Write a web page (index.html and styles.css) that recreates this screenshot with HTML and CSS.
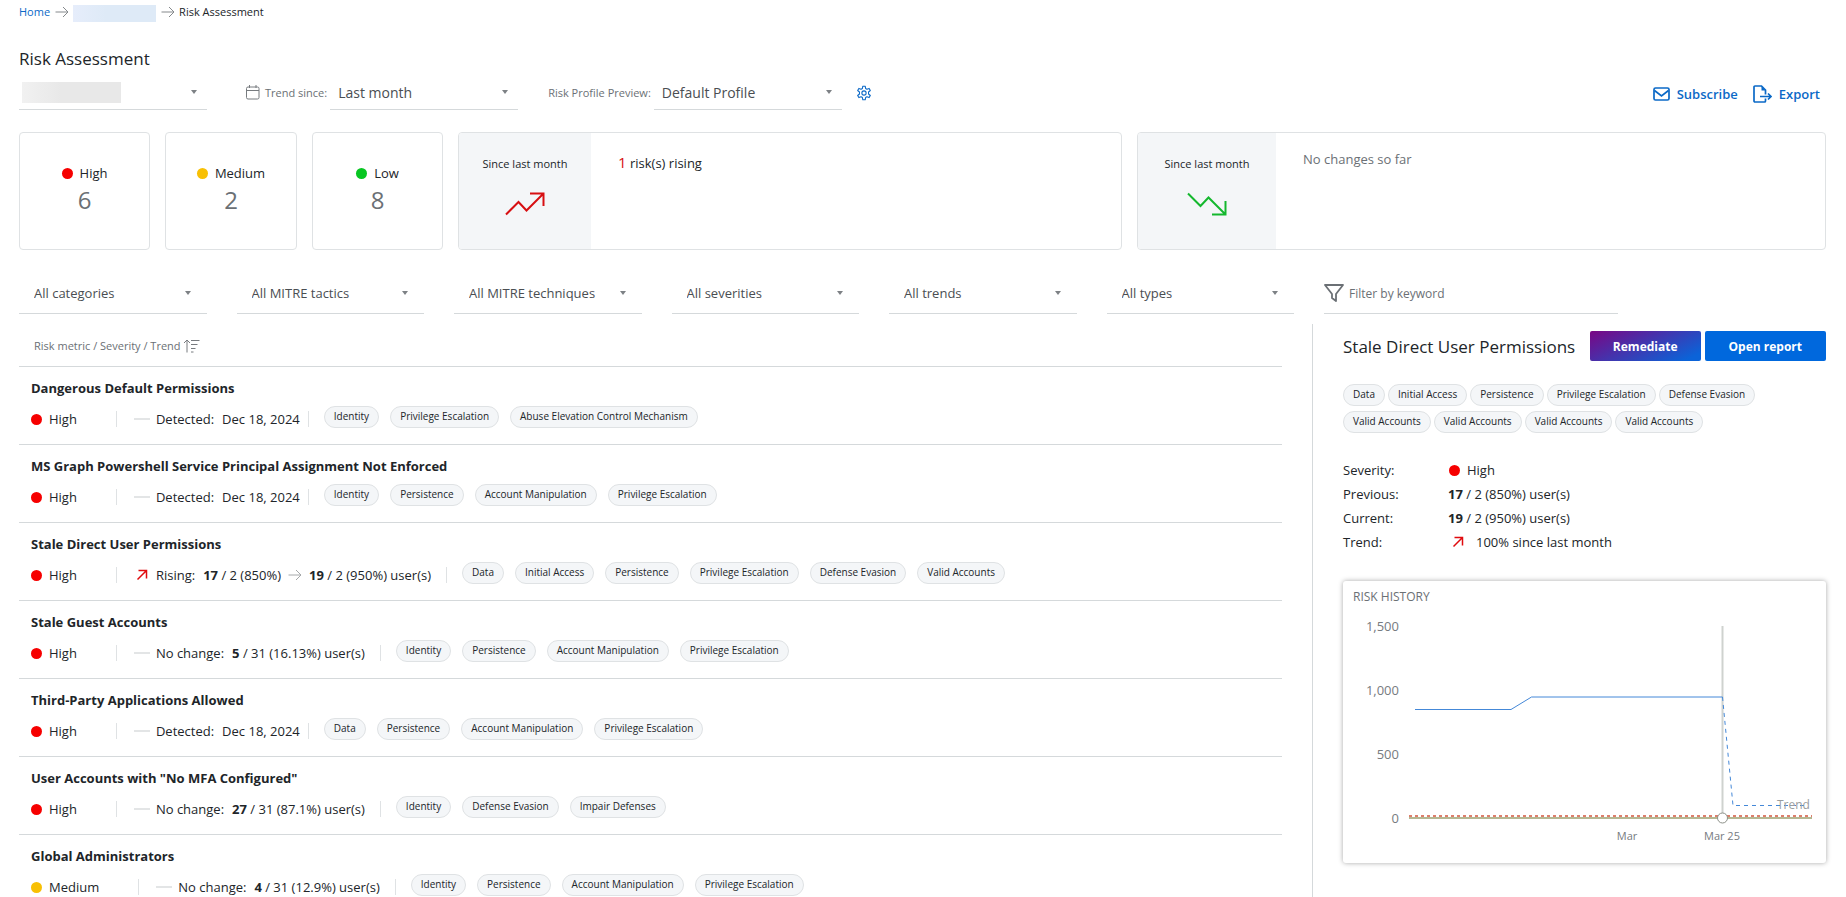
FILE: index.html
```html
<!DOCTYPE html>
<html lang="en">
<head>
    <meta charset="UTF-8">
    <meta name="viewport" content="width=device-width, initial-scale=1.0">
    <title>Risk Assessment</title>
    <link rel="stylesheet" href="styles.css">
</head>
<body>
    <!-- shared icons -->
    <svg class="sprite" aria-hidden="true">
        <symbol id="i-arrow" viewBox="0 0 14 12"><path d="M0.500 6H13M8 1l5 5-5 5" fill="none" stroke="currentColor"/></symbol>
        <symbol id="i-rise" viewBox="0 0 12 12"><path d="M1.500 10.500L10 2M2.500 1.500H10.500V9.500" fill="none" stroke="currentColor" stroke-width="1.500"/></symbol>
    </svg>

    <div class="page">
        <nav class="breadcrumb" aria-label="Breadcrumb">
            <a href="#">Home</a>
            <svg class="crumb-arrow"><use href="#i-arrow"/></svg>
            <span class="crumb-hidden"></span>
            <svg class="crumb-arrow"><use href="#i-arrow"/></svg>
            <span>Risk Assessment</span>
        </nav>

        <h1>Risk Assessment</h1>

        <div class="toolbar">
            <div class="select large tenant">
                <select aria-label="Tenant"><option></option></select>
            </div>
            <div class="field trend-field">
                <svg class="calendar" width="14" height="15" viewBox="0 0 14 15" fill="none" stroke="#777b7f"><rect x="0.500" y="2" width="12.500" height="12" rx="1.500"/><path d="M0.500 5.500H13M3.500 0v3M10 0v3"/></svg>
                <label for="trend">Trend since:</label>
                <div class="select large"><select id="trend"><option>Last month</option></select></div>
            </div>
            <div class="field">
                <label for="profile">Risk Profile Preview:</label>
                <div class="select large"><select id="profile"><option>Default Profile</option></select></div>
            </div>
            <button class="icon-button" aria-label="Profile settings">
                <svg width="16" height="16" viewBox="0 0 24 24" fill="none" stroke="currentColor" stroke-width="1.600" stroke-linejoin="round"><path d="M9.600 5.200L10.200 1.800h3.600l.6 3.400 2 1.200 3.300-1.300 1.800 3.200-2.700 2.200v3l2.700 2.200-1.800 3.200-3.300-1.300-2 1.200-.6 3.400h-3.600l-.6-3.400-2-1.200-3.300 1.300-1.800-3.200 2.700-2.200v-3L2.500 8.300l1.800-3.200 3.300 1.300z"/><circle cx="12" cy="12" r="3.200"/></svg>
            </button>
            <div class="actions">
                <button class="link-button">
                    <svg width="17" height="14" viewBox="0 0 17 14" fill="none" stroke="currentColor" stroke-width="1.700"><rect x="1" y="1" width="15" height="12" rx="1.500"/><path d="M1.500 3.500L8.500 9l7-5.500"/></svg>
                    Subscribe
                </button>
                <button class="link-button">
                    <svg width="19" height="18" viewBox="0 0 19 18" fill="none" stroke="currentColor" stroke-width="1.700"><path d="M12.500 13.500V16q0 1-1 1H2q-1 0-1-1V2q0-1 1-1h6.500l4 4v4.500M7 11.500h11M15 8.500l3 3-3 3"/><path d="M8.500 1l4 4.500h-4z" fill="currentColor" stroke="none"/></svg>
                    Export
                </button>
            </div>
        </div>

        <section class="summary">
            <div class="card count">
                <div class="severity"><i class="dot high"></i>High</div>
                <strong>6</strong>
            </div>
            <div class="card count">
                <div class="severity"><i class="dot medium"></i>Medium</div>
                <strong>2</strong>
            </div>
            <div class="card count">
                <div class="severity"><i class="dot low"></i>Low</div>
                <strong>8</strong>
            </div>
            <div class="card change">
                <div class="change-side">
                    <span>Since last month</span>
                    <svg width="40" height="24" viewBox="0 0 40 24" fill="none" stroke="#d70f12" stroke-width="2"><path d="M1 22.500L13.500 10l8 8.500L38 2M25 1.500h13.500V14"/></svg>
                </div>
                <p class="rising"><b>1</b> risk(s) rising</p>
            </div>
            <div class="card change falling">
                <div class="change-side">
                    <span>Since last month</span>
                    <svg width="40" height="24" viewBox="0 0 40 24" fill="none" stroke="#14b82e" stroke-width="2"><path d="M1 1.500L13.500 14l8-8.500L38 22M25 22.500h13.500V9"/></svg>
                </div>
                <p class="empty">No changes so far</p>
            </div>
        </section>

        <form class="filters">
            <div class="select"><select aria-label="Categories"><option>All categories</option></select></div>
            <div class="select"><select aria-label="MITRE tactics"><option>All MITRE tactics</option></select></div>
            <div class="select"><select aria-label="MITRE techniques"><option>All MITRE techniques</option></select></div>
            <div class="select"><select aria-label="Severities"><option>All severities</option></select></div>
            <div class="select"><select aria-label="Trends"><option>All trends</option></select></div>
            <div class="select"><select aria-label="Types"><option>All types</option></select></div>
            <div class="keyword">
                <svg width="20" height="18" viewBox="0 0 20 18" fill="none" stroke="#6b7075" stroke-width="1.800" stroke-linejoin="round"><path d="M1 1h18l-7 9v7l-4-3v-4z"/></svg>
                <input type="text" placeholder="Filter by keyword" aria-label="Filter by keyword">
            </div>
        </form>

        <main>
            <section class="risks">
                <div class="risks-head">
                    Risk metric / Severity / Trend
                    <svg width="17" height="14" viewBox="0 0 17 14" fill="none" stroke="#777b7f"><path d="M4 13.500V1M1 4l3-3 3 3M8 1.500h8.500M8 5.500h6.500M8 9.500h4.500M8 13h2.500"/></svg>
                </div>

                <article class="risk">
                    <h2>Dangerous Default Permissions</h2>
                    <div class="risk-meta">
                        <span class="severity"><i class="dot high"></i>High</span>
                        <div class="trend detected"><i class="dash"></i><span>Detected:</span><span>Dec 18, 2024</span></div>
                        <div class="tags"><span>Identity</span><span>Privilege Escalation</span><span>Abuse Elevation Control Mechanism</span></div>
                    </div>
                </article>

                <article class="risk">
                    <h2>MS Graph Powershell Service Principal Assignment Not Enforced</h2>
                    <div class="risk-meta">
                        <span class="severity"><i class="dot high"></i>High</span>
                        <div class="trend detected"><i class="dash"></i><span>Detected:</span><span>Dec 18, 2024</span></div>
                        <div class="tags"><span>Identity</span><span>Persistence</span><span>Account Manipulation</span><span>Privilege Escalation</span></div>
                    </div>
                </article>

                <article class="risk">
                    <h2>Stale Direct User Permissions</h2>
                    <div class="risk-meta">
                        <span class="severity"><i class="dot high"></i>High</span>
                        <div class="trend"><svg class="rise"><use href="#i-rise"/></svg><span>Rising:</span><span><b>17</b> / 2 (850%)</span><svg class="to"><use href="#i-arrow"/></svg><span><b>19</b> / 2 (950%) user(s)</span></div>
                        <div class="tags"><span>Data</span><span>Initial Access</span><span>Persistence</span><span>Privilege Escalation</span><span>Defense Evasion</span><span>Valid Accounts</span></div>
                    </div>
                </article>

                <article class="risk">
                    <h2>Stale Guest Accounts</h2>
                    <div class="risk-meta">
                        <span class="severity"><i class="dot high"></i>High</span>
                        <div class="trend"><i class="dash"></i><span>No change:</span><span><b>5</b> / 31 (16.13%) user(s)</span></div>
                        <div class="tags"><span>Identity</span><span>Persistence</span><span>Account Manipulation</span><span>Privilege Escalation</span></div>
                    </div>
                </article>

                <article class="risk">
                    <h2>Third-Party Applications Allowed</h2>
                    <div class="risk-meta">
                        <span class="severity"><i class="dot high"></i>High</span>
                        <div class="trend detected"><i class="dash"></i><span>Detected:</span><span>Dec 18, 2024</span></div>
                        <div class="tags"><span>Data</span><span>Persistence</span><span>Account Manipulation</span><span>Privilege Escalation</span></div>
                    </div>
                </article>

                <article class="risk">
                    <h2>User Accounts with "No MFA Configured"</h2>
                    <div class="risk-meta">
                        <span class="severity"><i class="dot high"></i>High</span>
                        <div class="trend"><i class="dash"></i><span>No change:</span><span><b>27</b> / 31 (87.1%) user(s)</span></div>
                        <div class="tags"><span>Identity</span><span>Defense Evasion</span><span>Impair Defenses</span></div>
                    </div>
                </article>

                <article class="risk">
                    <h2>Global Administrators</h2>
                    <div class="risk-meta">
                        <span class="severity"><i class="dot medium"></i>Medium</span>
                        <div class="trend"><i class="dash"></i><span>No change:</span><span><b>4</b> / 31 (12.9%) user(s)</span></div>
                        <div class="tags"><span>Identity</span><span>Persistence</span><span>Account Manipulation</span><span>Privilege Escalation</span></div>
                    </div>
                </article>
            </section>

            <aside class="detail">
                <div class="detail-head">
                    <h2>Stale Direct User Permissions</h2>
                    <button class="remediate">Remediate</button>
                    <button class="report">Open report</button>
                </div>

                <div class="tags">
                    <span>Data</span><span>Initial Access</span><span>Persistence</span><span>Privilege Escalation</span><span>Defense Evasion</span>
                    <span>Valid Accounts</span><span>Valid Accounts</span><span>Valid Accounts</span><span>Valid Accounts</span>
                </div>

                <dl>
                    <dt>Severity:</dt>
                    <dd class="severity"><i class="dot high"></i>High</dd>
                    <dt>Previous:</dt>
                    <dd><b>17</b> / 2 (850%) user(s)</dd>
                    <dt>Current:</dt>
                    <dd><b>19</b> / 2 (950%) user(s)</dd>
                    <dt>Trend:</dt>
                    <dd class="since"><svg class="rise"><use href="#i-rise"/></svg>100% since last month</dd>
                </dl>

                <div class="history">
                    <h3>Risk history</h3>
                    <svg class="chart" viewBox="0 0 483 250">
                        <g class="y-labels">
                            <text x="56" y="18">1,500</text>
                            <text x="56" y="82">1,000</text>
                            <text x="56" y="146">500</text>
                            <text x="56" y="210">0</text>
                        </g>
                        <path class="marker" d="M379.500 13V200"/>
                        <path class="axis" d="M66 205H469"/>
                        <path class="threshold" d="M66 203H469"/>
                        <path class="line" d="M72 96.500H168L188.500 84H379.500"/>
                        <path class="line forecast" d="M379.500 84L390 192.500H463"/>
                        <circle class="handle" cx="379.500" cy="205" r="5"/>
                        <text class="trend-label" x="434" y="196">Trend</text>
                        <text class="x-label" x="284" y="227">Mar</text>
                        <text class="x-label" x="379" y="227">Mar 25</text>
                    </svg>
                </div>

                <h3 class="next">Trend data</h3>
            </aside>
        </main>
    </div>
</body>
</html>
```
FILE: styles.css
```css
* {
    box-sizing: border-box;
}
body {
    margin: 0;
    background-color: #fff;
    color: #212529;
    font-family: "Open Sans", sans-serif;
    font-size: 13px;
}
h1, h2, h3, p, dl, dd {
    margin: 0;
}
button, select, input {
    font-family: inherit;
    margin: 0;
}
button {
    border: none;
    background: none;
    padding: 0;
    cursor: pointer;
}
svg {
    display: block;
    flex: none;
}
.sprite {
    display: none;
}
.page {
    height: 100vh;
    overflow: hidden;
    padding: 0 20px 0 19px;
}

/* top of the page */
.breadcrumb {
    display: flex;
    align-items: center;
    height: 22px;
    padding-top: 1px;
    font-size: 11px;
}
.breadcrumb a {
    color: #0b69c7;
    text-decoration: none;
}
.crumb-arrow {
    width: 14px;
    height: 12px;
    margin: 0 4px 0 5px;
    color: #85898c;
}
.crumb-hidden {
    width: 83px;
    height: 17px;
    align-self: flex-end;
    background: linear-gradient(90deg, #e6edfb, #deeaf7 40%);
}
h1 {
    margin-top: 25px;
    font-size: 17px;
    font-weight: 400;
    line-height: 24px;
}
.toolbar {
    display: flex;
    align-items: center;
    margin-top: 3px;
}
.select {
    position: relative;
}
.select select {
    appearance: none;
    display: block;
    width: 100%;
    height: 42px;
    padding: 1px 30px 0 15px;
    border: none;
    border-bottom: 1px solid #d5d9db;
    border-radius: 0;
    background-color: transparent;
    color: #4a4e52;
    font-size: 13px;
}
.select::after {
    content: "";
    position: absolute;
    top: 50%;
    right: 16px;
    margin-top: -2px;
    border: 3px solid transparent;
    border-top: 4px solid #7d8185;
    border-bottom: none;
    pointer-events: none;
}
.select.large {
    width: 188px;
}
.select.large::after {
    right: 10px;
}
.select.large select {
    height: 36px;
    padding-left: 8px;
    font-size: 14px;
}
.tenant select {
    background: linear-gradient(90deg, #f1f1f1, #e8e8e8 40%) 3px 8px / 99px 21px no-repeat;
}
.field {
    display: flex;
    align-items: center;
    margin-left: 30px;
    color: #6b7075;
    font-size: 11px;
}
.field .select {
    margin-left: 3px;
}
.trend-field {
    margin-left: 39px;
}
.calendar {
    margin-right: 5px;
}
.icon-button {
    margin-left: 14px;
    padding-top: 2px;
    color: #0b69c7;
}
.actions {
    display: flex;
    gap: 15px;
    margin-left: auto;
    padding: 3px 6px 0 0;
}
.link-button {
    display: flex;
    align-items: center;
    gap: 7px;
    color: #0b69c7;
    font-size: 13px;
    font-weight: 600;
}

/* summary cards */
.summary {
    display: grid;
    grid-template-columns: 131fr 132fr 131fr 664fr 689fr;
    gap: 15px;
    margin-top: 22px;
}
.card {
    min-height: 118px;
    border: 1px solid #dfe2e4;
    border-radius: 4px;
    overflow: hidden;
}
.severity {
    display: flex;
    align-items: center;
    gap: 7px;
}
.dot {
    width: 11px;
    height: 11px;
    border-radius: 50%;
}
.dot.high {
    background-color: #f60000;
}
.dot.medium {
    background-color: #f8c004;
}
.dot.low {
    background-color: #08c622;
}
.count {
    display: flex;
    flex-direction: column;
    align-items: center;
    padding-top: 31px;
}
.count strong {
    color: #6b7075;
    font-size: 24px;
    font-weight: 400;
    line-height: 36px;
}
.change {
    display: flex;
}
.change-side {
    display: flex;
    flex-direction: column;
    align-items: center;
    gap: 21px;
    width: 132px;
    padding-top: 23px;
    background-color: #f4f6f8;
    font-size: 11px;
}
.falling .change-side {
    width: 138px;
}
.change p {
    padding: 19px 27px;
    line-height: 20px;
}
.change b {
    color: #d70f12;
    font-size: 15px;
    font-weight: 400;
}
.change .empty {
    padding-top: 16px;
    color: #6b7075;
}

/* filters */
.filters {
    display: grid;
    grid-template-columns: repeat(6, 375fr) 588fr;
    gap: 30px;
    margin-top: 22px;
    padding-right: 208px;
}
.keyword {
    display: flex;
    align-items: center;
    gap: 5px;
    border-bottom: 1px solid #d5d9db;
}
.keyword input {
    flex: 1;
    min-width: 0;
    border: none;
    padding: 1px 0 0;
    background: none;
    font-size: 12px;
}
.keyword input::placeholder {
    color: #6b7075;
}

main {
    display: grid;
    grid-template-columns: 1263fr 514fr;
    gap: 30px;
    margin-top: 10px;
}

/* list of risks */
.risks-head {
    display: flex;
    align-items: center;
    gap: 2px;
    height: 43px;
    padding: 1px 0 0 15px;
    border-bottom: 1px solid #d5d9db;
    color: #6b7075;
    font-size: 11px;
}
.risk {
    padding: 11px 0 12px 12px;
    border-bottom: 1px solid #d5d9db;
}
.risk h2 {
    font-size: 13px;
    font-weight: 700;
    line-height: 20px;
}
.risk-meta {
    display: flex;
    align-items: center;
    min-height: 26px;
    margin-top: 8px;
}
.trend {
    display: flex;
    align-items: center;
    gap: 8px;
    margin-left: 39px;
    padding-right: 15px;
}
.trend.detected {
    padding-right: 8px;
}
.trend::before,
.risk-meta .tags::before {
    content: "";
    width: 1px;
    height: 16px;
    background-color: #dfe2e4;
}
.dash {
    width: 16px;
    height: 2px;
    margin: 0 -2px 0 9px;
    background-color: #e3e5e6;
}
.rise {
    width: 12px;
    height: 12px;
    color: #e00b0e;
}
.trend .rise {
    margin-left: 11px;
}
.to {
    width: 14px;
    height: 12px;
    margin: 0 -1px;
    color: #a5a8aa;
}
.tags {
    display: flex;
    flex-wrap: wrap;
    gap: 5px 3px;
}
.tags span {
    height: 22px;
    padding: 0 9px;
    border: 1px solid #dfe2e4;
    border-radius: 11px;
    background-color: #f4f6f8;
    font-size: 10px;
    line-height: 19px;
}
.risk-meta .tags {
    align-self: flex-start;
    gap: 11px;
}
.risk-meta .tags::before {
    margin: 5px 4px 0 0;
}

/* selected risk */
.detail {
    padding: 7px 0 0 30px;
    border-left: 1px solid #d5d9db;
}
.detail-head {
    display: flex;
    align-items: center;
    gap: 4px;
}
.detail-head h2 {
    flex: 1;
    font-size: 17px;
    font-weight: 400;
    white-space: nowrap;
}
.detail-head button {
    height: 30px;
    border-radius: 2px;
    color: #fff;
    font-size: 12px;
    font-weight: 700;
    white-space: nowrap;
}
.detail-head .remediate {
    padding: 0 23px;
    background: linear-gradient(155deg, #7a0684, #0b63d8 90%);
}
.detail-head .report {
    padding: 0 24px;
    background-color: #0068dd;
}
.detail .tags {
    margin-top: 23px;
    padding-right: 60px;
}
dl {
    display: grid;
    grid-template-columns: 105px 1fr;
    margin-top: 25px;
    line-height: 24px;
}
dd.severity {
    padding-left: 1px;
}
.since {
    display: flex;
    align-items: center;
    gap: 12px;
    padding-left: 4px;
}
.history {
    margin-top: 27px;
    border-radius: 3px;
    box-shadow: 0 0 5px rgba(0, 0, 0, 0.35);
}
.history h3 {
    height: 32px;
    padding: 7px 10px 0;
    color: #6b7075;
    font-size: 12px;
    font-weight: 400;
    line-height: 18px;
    text-transform: uppercase;
}
.chart {
    width: 100%;
    font-size: 13px;
}
.chart text {
    fill: #777b7f;
}
.chart path {
    fill: none;
}
.y-labels {
    text-anchor: end;
}
.chart .x-label {
    font-size: 11px;
    text-anchor: middle;
}
.marker {
    stroke: #cfd2cf;
    stroke-width: 2;
}
.axis {
    stroke: #b5b792;
    stroke-width: 2;
}
.threshold {
    stroke: #dd7f6c;
    stroke-width: 2;
    stroke-dasharray: 3 3;
}
.line {
    stroke: #4488d8;
}
.forecast {
    stroke-dasharray: 4 4;
}
.handle {
    fill: #fff;
    stroke: #8c9088;
}
.chart .trend-label {
    fill: #999da0;
    font-size: 12px;
}
.next {
    margin-top: 30px;
    font-size: 14px;
    font-weight: 400;
    line-height: 20px;
}
```
